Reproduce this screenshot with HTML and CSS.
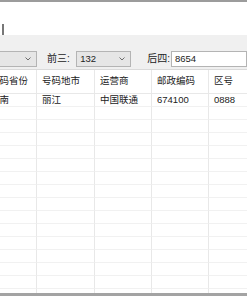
FILE: index.html
```html
<!DOCTYPE html>
<html lang="zh-CN">
<head>
    <meta charset="UTF-8">
    <title>号码归属地查询</title>
    <link rel="stylesheet" href="styles.css">
</head>
<body>
<div class="frame">
    <div class="top-edge"></div>
    <div class="editor"><span class="caret"></span></div>
    <div class="toolbar">
        <div class="combo combo-first">
            <span class="combo-value"></span>
            <svg class="arrow" width="6" height="4" viewBox="0 0 6 4"><path d="M0.5 0.5 L3 3 L5.5 0.5" fill="none" stroke="#6d6d6d" stroke-width="1"/></svg>
        </div>
        <span class="field-label">前三:</span>
        <div class="combo combo-mid">
            <span class="combo-value">132</span>
            <svg class="arrow" width="6" height="4" viewBox="0 0 6 4"><path d="M0.5 0.5 L3 3 L5.5 0.5" fill="none" stroke="#6d6d6d" stroke-width="1"/></svg>
        </div>
        <span class="field-label label-last">后四:</span>
        <div class="textbox">8654</div>
    </div>
    <div class="grid-area">
        <div class="grid-row head">
            <div class="cell first">号码省份</div>
            <div class="cell">号码地市</div>
            <div class="cell">运营商</div>
            <div class="cell">邮政编码</div>
            <div class="cell">区号</div>
        </div>
        <div class="grid-row">
            <div class="cell first">云南</div>
            <div class="cell">丽江</div>
            <div class="cell">中国联通</div>
            <div class="cell">674100</div>
            <div class="cell">0888</div>
        </div>
        <div class="grid-row"><div class="cell first"></div><div class="cell"></div><div class="cell"></div><div class="cell"></div><div class="cell"></div></div>
        <div class="grid-row"><div class="cell first"></div><div class="cell"></div><div class="cell"></div><div class="cell"></div><div class="cell"></div></div>
        <div class="grid-row"><div class="cell first"></div><div class="cell"></div><div class="cell"></div><div class="cell"></div><div class="cell"></div></div>
        <div class="grid-row"><div class="cell first"></div><div class="cell"></div><div class="cell"></div><div class="cell"></div><div class="cell"></div></div>
        <div class="grid-row"><div class="cell first"></div><div class="cell"></div><div class="cell"></div><div class="cell"></div><div class="cell"></div></div>
        <div class="grid-row"><div class="cell first"></div><div class="cell"></div><div class="cell"></div><div class="cell"></div><div class="cell"></div></div>
        <div class="grid-row"><div class="cell first"></div><div class="cell"></div><div class="cell"></div><div class="cell"></div><div class="cell"></div></div>
        <div class="grid-row"><div class="cell first"></div><div class="cell"></div><div class="cell"></div><div class="cell"></div><div class="cell"></div></div>
        <div class="grid-row"><div class="cell first"></div><div class="cell"></div><div class="cell"></div><div class="cell"></div><div class="cell"></div></div>
        <div class="grid-row"><div class="cell first"></div><div class="cell"></div><div class="cell"></div><div class="cell"></div><div class="cell"></div></div>
        <div class="grid-row"><div class="cell first"></div><div class="cell"></div><div class="cell"></div><div class="cell"></div><div class="cell"></div></div>
        <div class="grid-row"><div class="cell first"></div><div class="cell"></div><div class="cell"></div><div class="cell"></div><div class="cell"></div></div>
        <div class="grid-row"><div class="cell first"></div><div class="cell"></div><div class="cell"></div><div class="cell"></div><div class="cell"></div></div>
        <div class="grid-row"><div class="cell first"></div><div class="cell"></div><div class="cell"></div><div class="cell"></div><div class="cell"></div></div>
        <div class="grid-row"><div class="cell first"></div><div class="cell"></div><div class="cell"></div><div class="cell"></div><div class="cell"></div></div>
    </div>
    <div class="bottom-edge"></div>
</div>
</body>
</html>
```

FILE: styles.css
```css
body {
    margin: 0;
    background: #ffffff;
    font-family: "Liberation Sans", "Noto Sans CJK SC", sans-serif;
    font-size: 9.5px;
    color: #222222;
}
.frame {
    width: 247px;
    height: 296px;
    overflow: hidden;
    display: flex;
    flex-direction: column;
}
.top-edge {
    height: 2px;
    background: #9c9c9c;
}
.editor {
    height: 33px;
    background: #ffffff;
    padding: 22px 0 0 2px;
    box-sizing: border-box;
}
.caret {
    display: block;
    width: 2px;
    height: 11px;
    background: #777777;
}
.toolbar {
    height: 34px;
    box-sizing: border-box;
    padding-top: 16px;
    background: #f0f0f0;
    display: flex;
    align-items: flex-start;
}
.combo {
    height: 16px;
    box-sizing: border-box;
    border: 1px solid #b4b4b4;
    background: #e6e6e6;
    display: flex;
    align-items: center;
}
.combo-first {
    margin-left: -20px;
    width: 60px;
}
.combo-mid {
    width: 58px;
}
.combo-value {
    padding-left: 3px;
    line-height: 14px;
}
.arrow {
    margin-left: auto;
    margin-right: 5px;
}
.field-label {
    width: 31px;
    margin-left: 10px;
    line-height: 16px;
    font-size: 10px;
}
.label-last {
    width: 25px;
    margin-left: 16px;
}
.textbox {
    width: 80px;
    height: 16px;
    box-sizing: border-box;
    border: 1px solid #b4b4b4;
    background: #ffffff;
    padding-left: 3px;
    line-height: 14px;
}
.grid-area {
    flex: 1;
    overflow: hidden;
    border-top: 1px solid #dadada;
    background: #ffffff;
}
.grid-row {
    display: grid;
    grid-template-columns: 53px 58px 57px 57px 57px;
    margin-left: -16px;
    height: 13px;
}
.grid-row.head {
    height: 24px;
}
.cell {
    box-sizing: border-box;
    border-right: 1px solid #e8e8e8;
    border-bottom: 1px solid #f1f1f1;
    padding-left: 5px;
    line-height: 12px;
    white-space: nowrap;
    overflow: hidden;
}
.cell.first {
    padding-left: 6px;
}
.head .cell {
    padding-top: 5px;
    border-bottom-color: #e8e8e8;
}
.bottom-edge {
    height: 3px;
    background: #a3a3a3;
}
```
